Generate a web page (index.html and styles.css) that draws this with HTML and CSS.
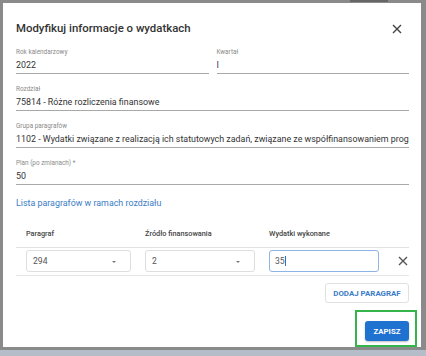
FILE: index.html
```html
<!DOCTYPE html>
<html lang="pl">
<head>
<meta charset="utf-8">
<link rel="stylesheet" href="styles.css">
</head>
<body>
<div class="topline"></div>
<div class="dialog">
  <div class="head">
    <h2 class="title">Modyfikuj informacje o wydatkach</h2>
    <svg class="close" width="10" height="10" viewBox="0 0 10 10"><path d="M1 1L9 9M9 1L1 9" stroke="#444" stroke-width="1.4" fill="none"/></svg>
  </div>
  <div class="row2">
    <div class="field"><div class="lbl">Rok kalendarzowy</div><div class="val">2022</div></div>
    <div class="field"><div class="lbl">Kwartał</div><div class="val">I</div></div>
  </div>
  <div class="field"><div class="lbl">Rozdział</div><div class="val">75814 - Różne rozliczenia finansowe</div></div>
  <div class="field"><div class="lbl">Grupa paragrafów</div><div class="val">1102 - Wydatki związane z realizacją ich statutowych zadań, związane ze współfinansowaniem programów</div></div>
  <div class="field"><div class="lbl">Plan (po zmianach) *</div><div class="val">50</div></div>
  <div class="link">Lista paragrafów w ramach rozdziału</div>
  <div class="thead">
    <div>Paragraf</div><div>Źródło finansowania</div><div>Wydatki wykonane</div><div></div>
  </div>
  <div class="trow">
    <div class="sel"><span>294</span><i class="arrow"></i></div>
    <div class="sel"><span>2</span><i class="arrow"></i></div>
    <div class="inp"><span>35</span><i class="caret"></i></div>
    <svg class="del" width="10" height="10" viewBox="0 0 10 10"><path d="M1 1L9 9M9 1L1 9" stroke="#555" stroke-width="1.4" fill="none"/></svg>
  </div>
  <div class="addrow"><button class="outlined">DODAJ PARAGRAF</button></div>
  <div class="actions"><button class="primary">ZAPISZ<span class="hl"></span></button></div>
</div>
<div class="bottomstrip"></div>
</body>
</html>
```
FILE: styles.css
```css
* { box-sizing: border-box; }
html, body { margin: 0; padding: 0; }
body {
  width: 426px; height: 356px; overflow: hidden;
  background: #8a8a8a;
  font-family: Roboto, "Noto Sans", sans-serif;
  position: relative;
  padding-top: 3px;
}
.topline { position: absolute; left: 350px; top: 0; width: 38px; height: 2px; background: #666; }
.dialog {
  margin-left: 3px;
  width: 418px; height: 344px;
  background: #fff;
  padding: 17px 12px 0 13px;
  display: flex; flex-direction: column;
}
.head { display: flex; align-items: center; justify-content: space-between; height: 16px; margin-bottom: 12px; }
.title { margin: 0; font-size: 11.4px; font-weight: 500; color: #333; line-height: 16px; }
.close { margin-right: 7px; margin-top: 1px; }
.row2 { display: flex; gap: 8px; }
.row2 .field { flex: 1; }
.field { margin-bottom: 11px; }
.lbl { font-size: 6.4px; line-height: 9px; height: 9px; color: #8a8a8a; }
.val {
  margin-top: 2px; font-size: 8.9px; line-height: 13px; color: #333;
  padding-bottom: 1px; border-bottom: 1px solid #a8a8a8;
  white-space: nowrap; overflow: hidden;
}
.link { font-size: 8.9px; line-height: 14px; color: #3b7cc6; margin-top: 0; }
.thead, .trow {
  display: grid;
  grid-template-columns: 105px 110px 110px 1fr;
  column-gap: 14px;
  padding-left: 10px;
  align-items: center;
}
.thead {
  margin-top: 9px; height: 29px;
  font-size: 7.3px; font-weight: 500; color: #444;
  border-bottom: 1px solid #e2e2e2;
}
.trow { padding-top: 2px; padding-bottom: 3px; border-bottom: 1px solid #e6e6e6; }
.sel, .inp {
  height: 22px; border: 1px solid #dedede; border-radius: 3px;
  display: flex; align-items: center; padding-left: 6px;
  font-size: 8.6px; color: #555; position: relative;
}
.inp { border-color: #8fb5e6; padding-left: 5px; }
.arrow {
  position: absolute; right: 14px; top: 10px;
  width: 0; height: 0;
  border-left: 2.5px solid transparent; border-right: 2.5px solid transparent;
  border-top: 2.5px solid #777;
}
.caret { display: inline-block; width: 1px; height: 10px; background: #2a6fc4; margin-left: 0.5px; }
.del { justify-self: end; margin-right: 1px; }
.addrow { display: flex; justify-content: flex-end; margin-top: 7px; }
button { font-family: Roboto, "Noto Sans", sans-serif; }
.outlined {
  width: 84px; height: 20px; background: #fff;
  border: 1px solid #e0e0e0; border-radius: 3px;
  color: #3b7cc6; font-size: 7.9px; font-weight: 700; padding: 0;
}
.actions { display: flex; justify-content: flex-end; margin-top: 18px; }
.primary {
  position: relative;
  width: 44px; height: 20px; background: #1f72cf;
  border: none; border-radius: 3px;
  color: #fff; font-size: 7.8px; font-weight: 700; padding: 0;
  box-shadow: 0 1px 2px rgba(0,0,0,0.25);
}
.hl {
  position: absolute; left: -10px; top: -11px; right: -8px; bottom: -6px;
  border: 2px solid #35b44b;
}
.bottomstrip { position: absolute; left: 0; right: 0; bottom: 0; height: 6px; background: #b5bdcb; }
```
